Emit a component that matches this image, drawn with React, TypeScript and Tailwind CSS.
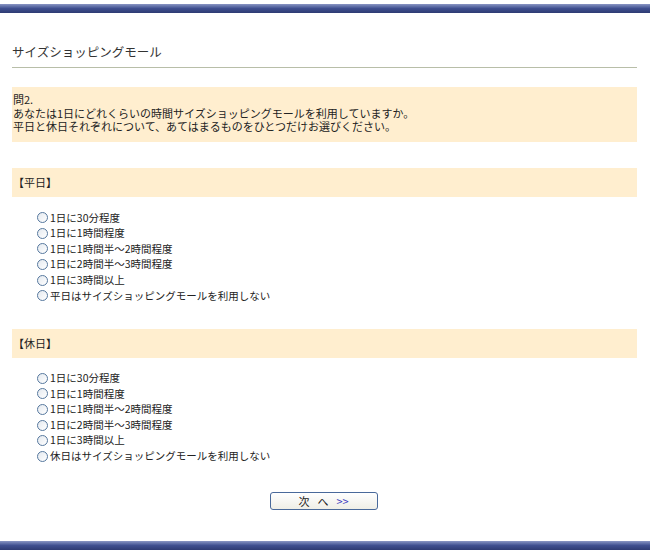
const font = { fontFamily: '"Noto Sans CJK JP", "Liberation Sans", sans-serif' }

const weekday = [
  "1日に30分程度",
  "1日に1時間程度",
  "1日に1時間半～2時間程度",
  "1日に2時間半～3時間程度",
  "1日に3時間以上",
  "平日はサイズショッピングモールを利用しない",
]

const holiday = [
  "1日に30分程度",
  "1日に1時間程度",
  "1日に1時間半～2時間程度",
  "1日に2時間半～3時間程度",
  "1日に3時間以上",
  "休日はサイズショッピングモールを利用しない",
]

function Bar() {
  return <div className="h-[9px] w-full bg-gradient-to-b from-[#8a96c4] via-[#3f4f8f] to-[#2e3b73]" />
}

function Options({ items }: { items: string[] }) {
  return (
    <div className="pl-[25px]">
      {items.map((t) => (
        <label key={t} className="flex items-center h-[15.6px] text-[10.5px] text-[#222] cursor-pointer">
          <span className="w-[11px] h-[11px] rounded-full border border-[#56789e] bg-gradient-to-br from-[#e4e9ef] to-white mr-[2px] shrink-0" />
          <span className="leading-none">{t}</span>
        </label>
      ))}
    </div>
  )
}

export default function App() {
  return (
    <div className="w-[650px] h-[557px] bg-white pt-[4px]" style={font}>
      <Bar />
      <div className="ml-[12px] w-[625px]">
        <div className="mt-[31px] pb-[7px] border-b border-[#b8bea8] text-[12.5px] leading-[16px] text-[#333]">
          サイズショッピングモール
        </div>

        <div className="mt-[19px] h-[55px] bg-[#ffeecf] pl-[1px] pt-[6px] text-[11px] leading-[13.5px] text-[#222]">
          <p>問2.</p>
          <p>あなたは1日にどれくらいの時間サイズショッピングモールを利用していますか。</p>
          <p>平日と休日それぞれについて、あてはまるものをひとつだけお選びください。</p>
        </div>

        <div className="mt-[26px] h-[29px] bg-[#ffeecf] pl-[1px] flex items-center text-[11px] text-[#222]">
          【平日】
        </div>
        <div className="mt-[13px]">
          <Options items={weekday} />
        </div>

        <div className="mt-[25px] h-[29px] bg-[#ffeecf] pl-[1px] flex items-center text-[11px] text-[#222]">
          【休日】
        </div>
        <div className="mt-[13px]">
          <Options items={holiday} />
        </div>

        <div className="mt-[28px] flex justify-center pr-[2px]">
          <button className="w-[108px] h-[18px] rounded-[3px] border border-[#49699a] bg-gradient-to-b from-white to-[#efeee6] text-[11px] leading-none text-[#222] flex items-center justify-center gap-[8px]">
            <span>次</span>
            <span>へ</span>
            <span className="text-[#4040c0]">&gt;&gt;</span>
          </button>
        </div>
      </div>
      <div className="mt-[31px]">
        <Bar />
      </div>
    </div>
  )
}
